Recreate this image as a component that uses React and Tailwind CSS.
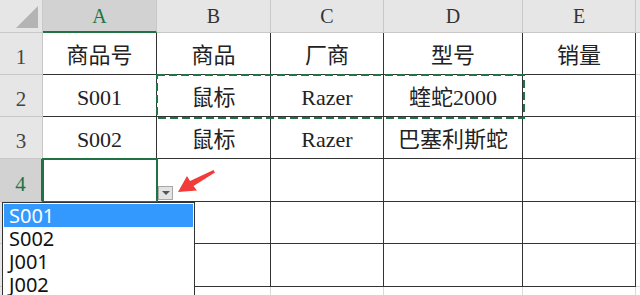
import React from 'react';

const cols = ['A', 'B', 'C', 'D', 'E'];

const rows = [
  ['商品号', '商品', '厂商', '型号', '销量'],
  ['S001', '鼠标', 'Razer', '蝰蛇2000', ''],
  ['S002', '鼠标', 'Razer', '巴塞利斯蛇', ''],
  ['', '', '', '', ''],
  ['', '', '', '', ''],
  ['', '', '', '', ''],
];

const options = ['S001', 'S002', 'J001', 'J002'];

const cellFont = { fontFamily: '"Liberation Serif", "Noto Sans CJK SC", serif' };

const App = () => {
  return (
    <div className="relative w-[640px] h-[295px] overflow-hidden bg-white" style={cellFont}>
      <div className="grid grid-cols-[43px_114px_114px_113px_139px_113px_1fr] grid-rows-[33px_42px_42px_42px_43px_42px_43px_42px]">
        {/* corner */}
        <div className="relative bg-[#e6e6e6] border-r border-b border-[#c8c8c8]">
          <div className="absolute right-[4px] bottom-[4px] w-0 h-0 border-l-[22px] border-l-transparent border-b-[22px] border-b-[#b4b4b4]" />
        </div>
        {cols.map((c, i) => (
          <div
            key={c}
            className={
              i === 0
                ? 'flex items-center justify-center bg-[#d2d2d2] border-r border-[#c8c8c8] border-b-2 border-b-[#217346] text-[20px] text-[#217346]'
                : 'flex items-center justify-center bg-[#e6e6e6] border-r border-b border-[#c8c8c8] text-[20px] text-[#333]'
            }
          >
            {c}
          </div>
        ))}
        <div className="bg-[#e6e6e6] border-b border-[#c8c8c8]" />

        {rows.map((r, ri) => (
          <React.Fragment key={ri}>
            <div
              className={
                ri === 3
                  ? 'flex items-end justify-center pb-[1px] bg-[#d2d2d2] border-b border-[#c8c8c8] border-r-2 border-r-[#217346] text-[21px] text-[#217346]'
                  : 'flex items-end justify-center pb-[1px] bg-[#e6e6e6] border-b border-r border-[#c8c8c8] text-[21px] text-[#444]'
              }
            >
              {ri < 4 ? ri + 1 : ''}
            </div>
            {r.map((v, ci) => (
              <div
                key={ci}
                className="flex items-center justify-center pt-[3px] border-r border-b border-[#333] text-[22px] text-[#222] whitespace-nowrap"
              >
                {v}
              </div>
            ))}
            <div className="border-b border-[#dadada]" />
          </React.Fragment>
        ))}

        <div className="bg-[#e6e6e6] border-r border-[#c8c8c8]" />
        {cols.map((c) => (
          <div key={c} className="border-r border-[#dadada]" />
        ))}
        <div />
      </div>

      {/* copy marquee B2:D2 */}
      <svg className="absolute left-[156px] top-[74px]" width="369" height="45" viewBox="0 0 369 45">
        <rect x="1" y="1" width="367" height="43" fill="none" stroke="#217346" strokeWidth="2" strokeDasharray="8 4" />
      </svg>

      {/* selected cell A4 */}
      <div className="absolute left-[42px] top-[158px] w-[116px] h-[45px] border-2 border-[#217346]" />

      {/* dropdown button */}
      <div className="absolute left-[158px] top-[186px] w-[15px] h-[14px] flex items-center justify-center bg-[#e3e3e3] border border-[#a8a8a8]">
        <div className="w-0 h-0 border-l-[4px] border-r-[4px] border-t-[4px] border-l-transparent border-r-transparent border-t-[#555]" />
      </div>

      {/* red arrow */}
      <svg className="absolute left-[170px] top-[163px]" width="50" height="36" viewBox="0 0 50 36">
        <polygon
          points="8,29 27,27.5 23.5,23 45,9.5 43.5,7 20,18 17,13"
          fill="#f23b3b"
        />
      </svg>

      {/* dropdown list */}
      <div
        className="absolute left-[2px] top-[202px] w-[193px] h-[100px] bg-white border border-[#333] p-[1px]"
        style={{ fontFamily: '"Noto Sans", "Open Sans", sans-serif' }}
      >
        {options.map((o, i) => (
          <div
            key={o}
            className={
              i === 0
                ? 'h-[23px] leading-[23px] pl-[5px] bg-[#3399ff] text-white text-[20px]'
                : 'h-[23px] leading-[23px] pl-[5px] text-[#111] text-[20px]'
            }
          >
            {o}
          </div>
        ))}
      </div>
    </div>
  );
};

export default App;
